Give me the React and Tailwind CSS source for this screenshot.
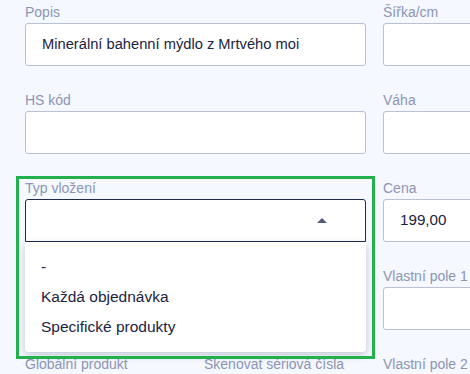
import { useState } from 'react';

const OPTIONS = ["-", "Každá objednávka", "Specifické produkty"];

function Field({ label, value, className = "", valueClass = "text-[15.2px]" }) {
  return (
    <div className={`flex flex-col ${className}`}>
      <div className="h-4 leading-4 mb-[3px] text-[14px] text-[#8d95b5] whitespace-nowrap">{label}</div>
      <div className={`h-[43px] bg-white border border-[#b9c0d8] rounded-[3px] flex items-center px-4 text-[#1b2444] whitespace-nowrap overflow-hidden ${valueClass}`}>
        {value}
      </div>
    </div>
  );
}

export default function App() {
  const [open] = useState(true);

  return (
    <div
      className="w-[470px] h-[374px] overflow-hidden bg-[#f5f8fe]"
      style={{ fontFamily: '"Liberation Sans", Arial, sans-serif' }}
    >
      <div className="grid grid-cols-[162px_162px_162px] gap-x-[17px] gap-y-[26px] pl-[25px] pt-[4px] w-[560px]">
        <Field label="Popis" value="Minerální bahenní mýdlo z Mrtvého moi" className="col-span-2" valueClass="text-[14.7px]" />
        <Field label="Šířka/cm" />

        <Field label="HS kód" className="col-span-2" />
        <Field label="Váha" />

        {/* Typ vložení – open select */}
        <div className="col-span-2 relative flex flex-col z-10">
          <div className="h-4 leading-4 mb-[3px] text-[14px] text-[#8d95b5]">Typ vložení</div>
          <div className="relative h-[43px] bg-white border border-[#1f2a4c] rounded-t-[3px] flex items-center px-4">
            <span className="absolute right-[38px] top-[18px] w-0 h-0 border-l-[5px] border-r-[5px] border-b-[5px] border-l-transparent border-r-transparent border-b-[#545d7e]" />
          </div>
          {open && (
            <div className="absolute left-0 right-0 top-[62px] bg-white rounded-b-[4px] shadow-[0_3px_8px_rgba(20,30,60,0.22)] py-[10px] z-10">
              {OPTIONS.map(opt => (
                <div key={opt} className="h-[30px] px-4 flex items-center text-[15.5px] text-[#1b2444]">
                  {opt}
                </div>
              ))}
            </div>
          )}
          {/* highlight frame */}
          <div className="absolute -left-[9px] -right-[9px] -top-[4px] h-[183px] border-[3px] border-[#22b14c] pointer-events-none z-20" />
        </div>
        <Field label="Cena" value="199,00" />

        <Field label="" className="col-span-2 invisible" />
        <Field label="Vlastní pole 1" />

        <Field label="Globální produkt" />
        <Field label="Skenovat sériová čísla" />
        <Field label="Vlastní pole 2" />
      </div>
    </div>
  );
}
